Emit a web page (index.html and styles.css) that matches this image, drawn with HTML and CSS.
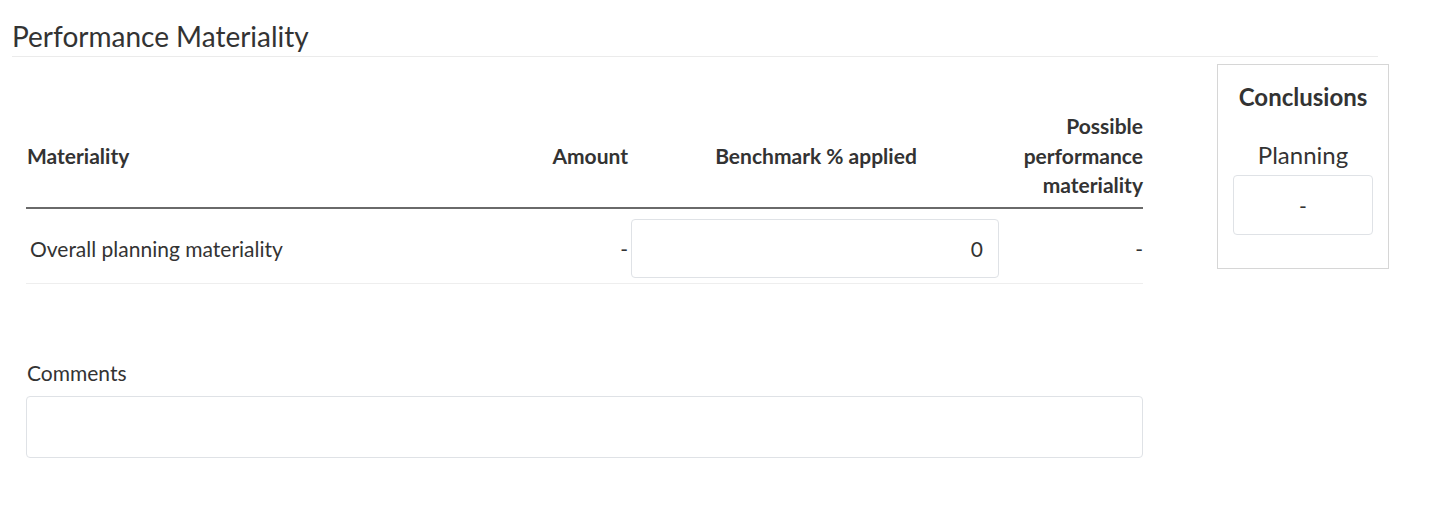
FILE: index.html
```html
<!DOCTYPE html>
<html lang="en">
<head>
  <meta charset="UTF-8" />
  <title>Performance Materiality</title>
  <link rel="stylesheet" href="styles.css">
</head>
<body>
  <div class="page">
    <h2 class="page-title">Performance Materiality</h2>

    <div class="layout">
      <div class="main">
        <!-- Materiality table -->
        <table class="mat-table">
          <colgroup>
            <col class="c-name">
            <col class="c-amount">
            <col class="c-bench">
            <col class="c-possible">
          </colgroup>
          <thead>
            <tr>
              <th class="left">Materiality</th>
              <th class="right amount">Amount</th>
              <th class="center">Benchmark % applied</th>
              <th class="right">Possible performance materiality</th>
            </tr>
          </thead>
          <tbody>
            <tr>
              <td class="name">Overall planning materiality</td>
              <td class="right amount">-</td>
              <td class="bench"><input class="num-input" type="text" value="0"></td>
              <td class="right">-</td>
            </tr>
          </tbody>
        </table>

        <!-- Comments -->
        <div class="comments">
          <label for="comments">Comments</label>
          <textarea id="comments"></textarea>
        </div>
      </div>

      <aside class="conclusions">
        <h3>Conclusions</h3>
        <p>Planning</p>
        <div class="conclusion-value">-</div>
      </aside>
    </div>
  </div>
</body>
</html>
```

FILE: styles.css
```css
body { font-family: 'Lato', sans-serif; margin: 0; padding: 0; color: #333; background: #fff; }
.page { padding: 20px 52px 0 12px; }

.page-title {
  font-size: 28px;
  font-weight: 400;
  margin: 0;
  padding-bottom: 4px;
  border-bottom: 1px solid #ebebeb;
  line-height: 32px;
}

.layout {
  display: flex;
  align-items: flex-start;
  gap: 74px;
  margin-top: 7px;
}

.main {
  flex-shrink: 0;
  width: 1117px;
  padding-left: 14px;
  padding-top: 47px;
}

.mat-table {
  width: 1117px;
  border-collapse: collapse;
  table-layout: fixed;
  font-size: 21px;
}

.c-name { width: 500px; }
.c-amount { width: 105px; }
.c-bench { width: 369px; }
.c-possible { width: 143px; }

.mat-table th {
  font-weight: 700;
  line-height: 29.5px;
  vertical-align: middle;
  padding: 0 0 7px 1px;
  border-bottom: 2px solid #6a6a6a;
}

.mat-table td {
  padding: 10px 0 5px;
  vertical-align: middle;
  border-bottom: 1px solid #eeeeee;
}

.left { text-align: left; }
.right { text-align: right; }
.center { text-align: center; }
.mat-table .amount { padding-right: 3px; }
.mat-table td.name { padding-left: 4px; }
.mat-table td.bench { padding-left: 0; }

.num-input {
  display: block;
  box-sizing: border-box;
  width: 368px;
  height: 59px;
  border: 1px solid #dfe2e6;
  border-radius: 4px;
  padding: 0 15px;
  font-family: 'Lato', sans-serif;
  font-size: 21px;
  color: #333;
  text-align: right;
  outline: none;
}

.comments {
  margin-top: 77px;
}

.comments label {
  display: block;
  font-size: 21px;
  line-height: 24px;
  margin: 0 0 11px 1px;
}

.comments textarea {
  display: block;
  box-sizing: border-box;
  width: 1117px;
  height: 62px;
  border: 1px solid #dfe2e6;
  border-radius: 4px;
  resize: none;
  font-family: 'Lato', sans-serif;
  font-size: 21px;
}

.conclusions {
  flex-shrink: 0;
  box-sizing: border-box;
  width: 172px;
  border: 1px solid #d6d6d6;
  padding: 17px 15px 33px;
  text-align: center;
}

.conclusions h3 {
  margin: 0;
  font-size: 24px;
  font-weight: 700;
  line-height: 30px;
}

.conclusions p {
  margin: 28px 0 5px;
  font-size: 24px;
  line-height: 30px;
}

.conclusion-value {
  height: 60px;
  box-sizing: border-box;
  border: 1px solid #dfe2e6;
  border-radius: 4px;
  display: flex;
  align-items: center;
  justify-content: center;
  font-size: 21px;
}
```
